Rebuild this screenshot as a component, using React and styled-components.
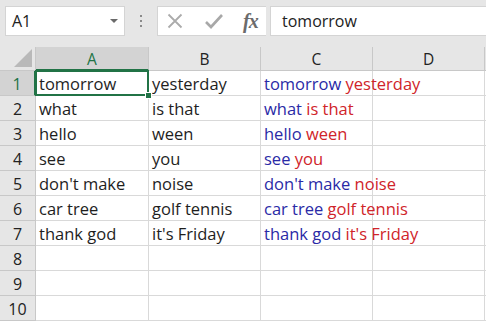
import React from "react";
import styled, { createGlobalStyle } from "styled-components";

const Global = createGlobalStyle`
  html, body { margin: 0; padding: 0; background: #ffffff; }
  body { font-family: "Open Sans", "Liberation Sans", sans-serif; overflow: hidden; }
`;

const Page = styled.div`
  width: 486px;
  height: 322px;
  overflow: hidden;
  background: #ffffff;
`;

const Toolbar = styled.div`
  height: 47px;
  box-sizing: border-box;
  background: #e6e6e6;
  display: flex;
  align-items: flex-start;
  padding: 6px 0 0 5px;
`;

const NameBox = styled.div`
  width: 120px;
  height: 30px;
  box-sizing: border-box;
  background: #fff;
  border: 1px solid #d4d4d4;
  display: flex;
  align-items: center;
  justify-content: space-between;
  padding: 0 6px 0 6px;
  font-size: 16px;
  color: #222;
`;

const Caret = styled.span`
  width: 0;
  height: 0;
  border-left: 4px solid transparent;
  border-right: 4px solid transparent;
  border-top: 4px solid #6a6a6a;
`;

const Dots = styled.div`
  width: 32px;
  height: 30px;
  display: flex;
  flex-direction: column;
  align-items: center;
  justify-content: center;
  gap: 3px;
`;

const Dot = styled.span`
  width: 2px;
  height: 2px;
  background: #8a8a8a;
`;

const IconBox = styled.div`
  width: 109px;
  height: 30px;
  box-sizing: border-box;
  background: #fff;
  border: 1px solid #d4d4d4;
  border-right: none;
  display: flex;
  align-items: center;
  padding-left: 9px;
  gap: 22px;
`;

const Fx = styled.span`
  font-family: "Liberation Serif", "DejaVu Serif", serif;
  font-style: italic;
  font-weight: bold;
  font-size: 20px;
  color: #6b6b6b;
  letter-spacing: -1px;
  margin-left: -2px;
  line-height: 1;
`;

const FormulaInput = styled.div`
  flex: 1;
  height: 30px;
  box-sizing: border-box;
  margin-left: 4px;
  background: #fff;
  border: 1px solid #d4d4d4;
  border-right: none;
  display: flex;
  align-items: center;
  padding-left: 11px;
  font-size: 16px;
  color: #222;
`;

const Grid = styled.div`
  display: grid;
  grid-template-columns: 36px 113px 112px 112px 112px 1px;
  grid-template-rows: 24px repeat(10, 25px);
`;

const Corner = styled.div`
  background: #e6e6e6;
  border-right: 1px solid #c8c8c8;
  border-bottom: 1px solid #c8c8c8;
  box-sizing: border-box;
  position: relative;
`;

const CornerTri = styled.div`
  position: absolute;
  right: 3px;
  bottom: 3px;
  width: 0;
  height: 0;
  border-left: 18px solid transparent;
  border-bottom: 18px solid #b9b9b9;
`;

const ColHead = styled.div`
  box-sizing: border-box;
  background: ${(p) => (p.$active ? "#d3d3d3" : "#e6e6e6")};
  color: ${(p) => (p.$active ? "#217346" : "#222")};
  border-right: 1px solid #c8c8c8;
  border-bottom: ${(p) => (p.$active ? "2px solid #217346" : "1px solid #c8c8c8")};
  display: flex;
  align-items: center;
  justify-content: center;
  font-size: 15.5px;
  padding-top: 1px;
`;

const RowHead = styled.div`
  box-sizing: border-box;
  background: ${(p) => (p.$active ? "#d3d3d3" : "#e6e6e6")};
  color: ${(p) => (p.$active ? "#217346" : "#222")};
  border-right: ${(p) => (p.$active ? "2px solid #217346" : "1px solid #c8c8c8")};
  border-bottom: 1px solid #c8c8c8;
  display: flex;
  align-items: center;
  justify-content: center;
  font-size: 16px;
  padding-top: 1px;
`;

const Cell = styled.div`
  box-sizing: border-box;
  border-right: 1px solid #d9d9d9;
  border-bottom: 1px solid #d9d9d9;
  display: flex;
  align-items: center;
  padding: 1px 0 0 3px;
  font-size: 16.5px;
  color: #1e1e1e;
  white-space: nowrap;
  overflow: visible;
  position: relative;
  ${(p) =>
    p.$selected &&
    `
    &::after {
      content: "";
      position: absolute;
      left: -1px; top: -1px; right: -1px; bottom: -1px;
      border: 2px solid #217346;
      pointer-events: none;
    }
    &::before {
      content: "";
      position: absolute;
      right: -4px; bottom: -4px;
      width: 5px; height: 5px;
      background: #217346;
      border: 1px solid #fff;
      z-index: 2;
    }
  `}
`;

const Filler = styled.div`
  border-bottom: 1px solid #d9d9d9;
  box-sizing: border-box;
`;

const HeadFiller = styled.div`
  background: #e6e6e6;
  border-bottom: 1px solid #c8c8c8;
  box-sizing: border-box;
`;

const Blue = styled.span`
  color: #2a2aa6;
`;
const Red = styled.span`
  color: #d0242a;
`;

const data = [
  ["tomorrow", "yesterday"],
  ["what", "is that"],
  ["hello", "ween"],
  ["see", "you"],
  ["don't make", "noise"],
  ["car tree", "golf tennis"],
  ["thank god", "it's Friday"],
  ["", ""],
  ["", ""],
  ["", ""],
];

const XIcon = () => (
  <svg width="16" height="16" viewBox="0 0 16 16">
    <path d="M1.5 1.5 L14.5 14.5 M14.5 1.5 L1.5 14.5" stroke="#ababab" strokeWidth="1.8" fill="none" />
  </svg>
);

const CheckIcon = () => (
  <svg width="18" height="16" viewBox="0 0 18 16">
    <path d="M1 9 L6 14 L17 2" stroke="#a8a8a8" strokeWidth="2.6" fill="none" />
  </svg>
);

export default function App() {
  return (
    <Page>
      <Global />
      <Toolbar>
        <NameBox>
          <span>A1</span>
          <Caret />
        </NameBox>
        <Dots>
          <Dot />
          <Dot />
          <Dot />
        </Dots>
        <IconBox>
          <XIcon />
          <CheckIcon />
          <Fx>fx</Fx>
        </IconBox>
        <FormulaInput>tomorrow</FormulaInput>
      </Toolbar>
      <Grid>
        <Corner>
          <CornerTri />
        </Corner>
        <ColHead $active>A</ColHead>
        <ColHead>B</ColHead>
        <ColHead>C</ColHead>
        <ColHead>D</ColHead>
        <HeadFiller />
        {data.map(([a, b], i) => (
          <React.Fragment key={i}>
            <RowHead $active={i === 0}>{i + 1}</RowHead>
            <Cell $selected={i === 0}>{a}</Cell>
            <Cell>{b}</Cell>
            <Cell>
              {a && (
                <>
                  <Blue>{a}</Blue>&nbsp;<Red>{b}</Red>
                </>
              )}
            </Cell>
            <Cell />
            <Filler />
          </React.Fragment>
        ))}
      </Grid>
    </Page>
  );
}
